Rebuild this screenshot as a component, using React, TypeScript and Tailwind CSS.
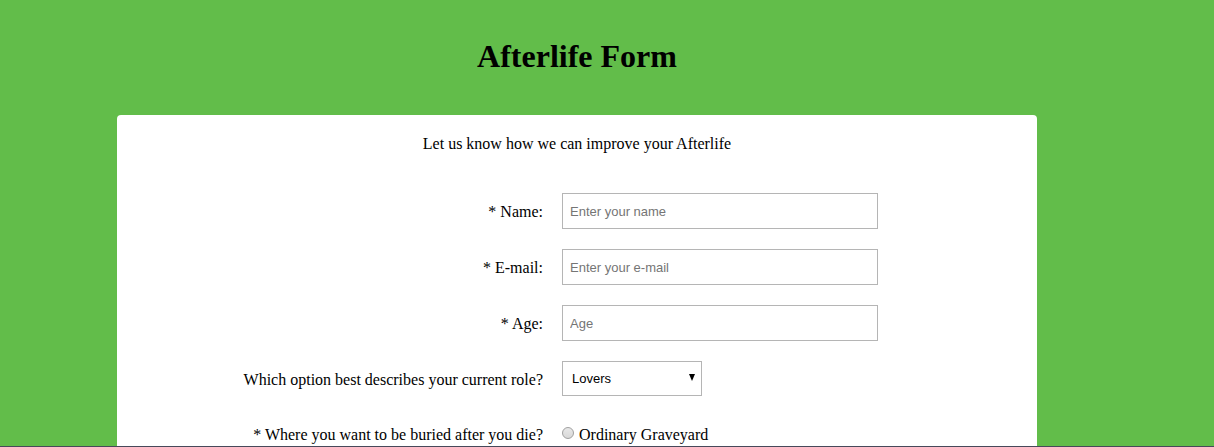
import type { ReactNode } from "react";

const controlClass = "border border-[#b5b5b5] bg-white font-['Liberation_Sans',sans-serif] text-[13px]";

function Row({ label, htmlFor, children }: { label: string; htmlFor: string; children: ReactNode }) {
  return (
    <div className="grid grid-cols-[426fr_475fr] items-center gap-x-[19px]">
      <label htmlFor={htmlFor} className="pt-0.5 text-right">
        {label}
      </label>
      <div className="flex items-center">{children}</div>
    </div>
  );
}

function TextField({ id, label, type, placeholder }: { id: string; label: string; type: string; placeholder: string }) {
  return (
    <Row label={label} htmlFor={id}>
      <input
        id={id}
        type={type}
        placeholder={placeholder}
        required
        className={`${controlClass} h-9 w-full max-w-[316px] px-[7px] placeholder:text-[#757575]`}
      />
    </Row>
  );
}

export default function App() {
  return (
    <div className="flex min-h-screen flex-col border-b border-[#47495a] bg-[#62bd4a] pr-[60px] font-['Liberation_Serif',serif] text-base leading-5 text-black">
      <h1 className="pt-9 pb-[39px] text-center text-[32px] leading-10 font-bold">Afterlife Form</h1>
      <main className="mx-auto w-full max-w-[920px] flex-1 rounded-t bg-white pt-[19px]">
        <p className="text-center">Let us know how we can improve your Afterlife</p>
        <form className="flex flex-col gap-5 pt-[39px]">
          <TextField id="name" label="* Name:" type="text" placeholder="Enter your name" />
          <TextField id="email" label="* E-mail:" type="email" placeholder="Enter your e-mail" />
          <TextField id="age" label="* Age:" type="number" placeholder="Age" />
          <Row label="Which option best describes your current role?" htmlFor="role">
            <div className="relative">
              <select id="role" className={`${controlClass} h-[35px] w-[140px] appearance-none px-[9px]`}>
                <option>Lovers</option>
              </select>
              <svg
                className="pointer-events-none absolute top-[13px] right-[7px] h-[7px] w-[6px]"
                viewBox="0 0 6 7"
                aria-hidden="true"
              >
                <path d="M0 0h6L3 7z" fill="#000" />
              </svg>
            </div>
          </Row>
          <div role="radiogroup" aria-labelledby="burial-label" className="grid grid-cols-[426fr_475fr] gap-x-[19px] pt-[9px]">
            <span id="burial-label" className="text-right">
              * Where you want to be buried after you die?
            </span>
            <label className="flex items-start gap-[5px]">
              <input
                type="radio"
                name="burial"
                className="mt-0.5 h-3 w-3 appearance-none rounded-full border border-[#a0a0a0] bg-linear-to-b from-[#e8e8e8] to-[#d8d8d8] checked:bg-black"
              />
              Ordinary Graveyard
            </label>
          </div>
        </form>
      </main>
    </div>
  );
}
